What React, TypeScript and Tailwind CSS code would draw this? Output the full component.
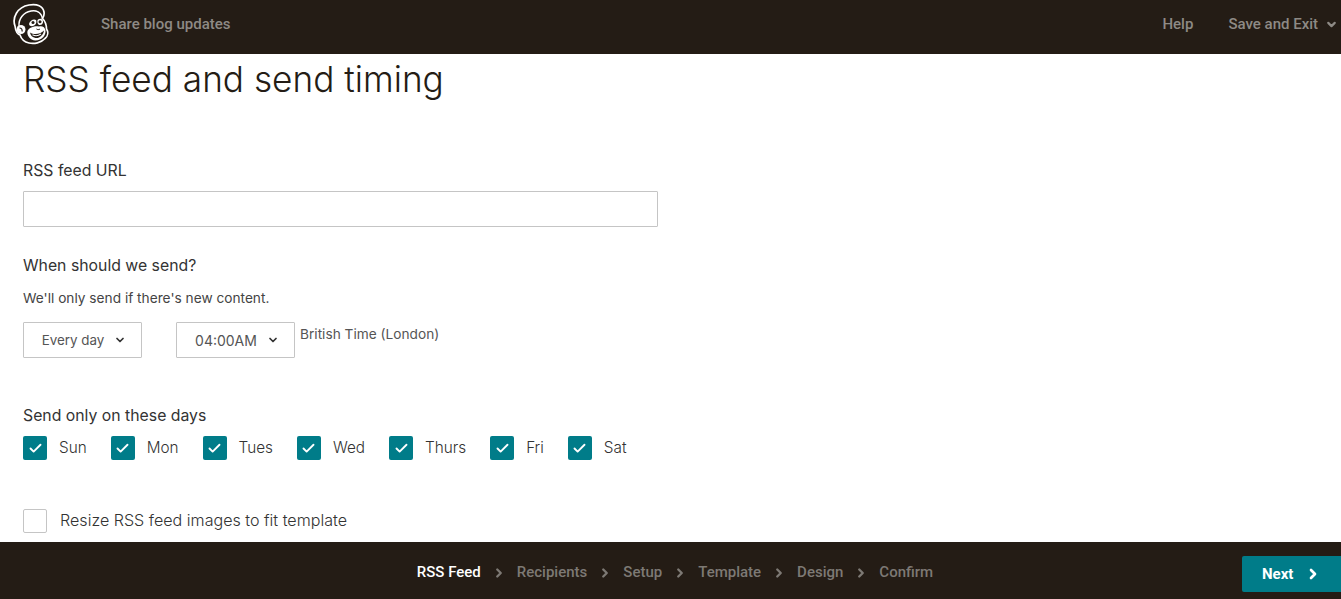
import { Check, ChevronDown, ChevronRight } from "lucide-react";

const days = ["Sun", "Mon", "Tues", "Wed", "Thurs", "Fri", "Sat"];

const steps = ["Recipients", "Setup", "Template", "Design", "Confirm"];

function Logo() {
  return (
    <svg width="38" height="42" viewBox="0 0 38 42" fill="none" className="ml-[12px] mt-[3px]">
      {/* head and cap outline */}
      <path
        d="M3 23 C0 15 5 4 17 2 C25 0.500 31 3 32 9 C32.500 12 31.500 14 30.500 15.500 C33 18 34.500 22 34.500 26 C36.500 29 36 33 33 35.500 C29 40 22 41 17 40 C12 39 9 35 8 32 C5 31 3.500 27 3 23 Z"
        fill="#241c15"
        stroke="#fff"
        strokeWidth="1.700"
      />
      {/* cap brim */}
      <path d="M7 23 C6.500 16 11 9.500 19 8 C24 7 29 9 30.500 15.500" stroke="#fff" strokeWidth="1.500" />
      {/* ear */}
      <circle cx="9" cy="26.500" r="4.500" fill="#fff" />
      <path d="M7.500 25 C9.500 25 10.500 26.500 10 28.500" stroke="#241c15" strokeWidth="1.200" />
      {/* eye patches */}
      <path d="M17 21 C18 17 22 15.500 24 17 C25 19 24 22 21 23 C19 23.500 17.500 23 17 21 Z" fill="#fff" />
      <path d="M25.500 17 C27.500 15 30.500 15.500 31 18 C31.500 20.500 29.500 22.500 27 22 C25.500 21 25 19 25.500 17 Z" fill="#fff" />
      <circle cx="21" cy="19.500" r="1.500" fill="#241c15" />
      <circle cx="28" cy="18.800" r="1.500" fill="#241c15" />
      {/* muzzle and mouth */}
      <path d="M15.500 28 C17 24 24 22.500 27 23.500 C30 22.500 33 24 33.500 27.500 C34 32 30 37.500 23.500 37.500 C18 37.500 14.500 32 15.500 28 Z" fill="#fff" />
      <path d="M18 29.500 C22 32 28 31.500 32 27.500 C31.500 32 27.500 35.500 23.500 35 C20.500 34.500 18.500 32.500 18 29.500 Z" fill="#241c15" />
      <path d="M20.500 31.800 C23 33 26.500 32.800 29 31" stroke="#fff" strokeWidth="1.100" />
      <path d="M24.500 26 C25.500 26.800 27 26.800 28 26" stroke="#241c15" strokeWidth="1" />
    </svg>
  );
}

function Select({ label, className }: { label: string; className: string }) {
  return (
    <div
      className={`flex h-[36px] w-[119px] items-center justify-center gap-[10px] rounded-[1px] border border-[#c5c5c5] pl-[3px] text-[#555] ${className}`}
    >
      {label}
      <ChevronDown size={12} strokeWidth={3.500} className="text-[#333]" />
    </div>
  );
}

export default function App() {
  return (
    <div className="flex h-[599px] w-[1341px] flex-col overflow-hidden bg-white font-['Inter',sans-serif] text-[#241c15]">
      <header className="flex h-[54px] shrink-0 items-start bg-[#241c15] font-['Roboto',sans-serif] text-[15px] font-medium text-[#8e8a85]">
        <Logo />
        <span className="ml-[51px] mt-[13px]">Share blog updates</span>
        <span className="ml-auto mt-[13px]">Help</span>
        <span className="ml-[35px] mt-[13px]">Save and Exit</span>
        <ChevronDown size={13} strokeWidth={4} className="ml-[7px] mr-[3px] mt-[18px]" />
      </header>

      <main className="min-h-0 flex-1 overflow-hidden pl-[23px]">
        <h1 className="mt-[3px] text-[35.200px] leading-[44px] font-light">RSS feed and send timing</h1>

        <p className="mt-[59px] text-[15.800px] leading-[22px] text-[#333]">RSS feed URL</p>
        <div className="mt-[9px] h-[36px] w-[635px] rounded-[1px] border border-[#c5c5c5]" />

        <p className="mt-[28px] text-[15.800px] leading-[22px] text-[#333]">When should we send?</p>
        <p className="mt-[11px] text-[13.700px] leading-[20px] text-[#444]">We'll only send if there's new content.</p>

        <div className="mt-[14px] flex items-start text-[14px]">
          <Select label="Every day" className="text-[13.400px]" />
          <Select label="04:00AM" className="ml-[34px]" />
          <span className="ml-[5px] mt-[2px] text-[13.700px] leading-[20px] text-[#555]">British Time (London)</span>
        </div>

        <p className="mt-[47px] text-[15.800px] leading-[22px] text-[#333]">Send only on these days</p>
        <div className="mt-[9px] flex items-center gap-[24px]">
          {days.map((day) => (
            <div key={day} className="flex items-center">
              <span className="flex h-[24px] w-[24px] items-center justify-center rounded-[2px] bg-[#007c89] text-white">
                <Check size={15} strokeWidth={3} />
              </span>
              <span className="ml-[12px] text-[15.300px] font-light text-[#333]">{day}</span>
            </div>
          ))}
        </div>

        <div className="mt-[49px] flex items-center">
          <span className="h-[24px] w-[24px] rounded-[2px] border border-[#c5c5c5]" />
          <span className="ml-[13px] mt-[-2px] text-[16.100px] font-light text-[#333]">Resize RSS feed images to fit template</span>
        </div>
      </main>

      <footer className="relative flex h-[57px] shrink-0 items-start justify-center bg-[#241c15] font-['Roboto',sans-serif] text-[15px] font-medium text-[#7d7974]">
        <div className="ml-[9px] mt-[22px] flex items-center leading-[16px]">
          <span className="text-white">RSS Feed</span>
          {steps.map((step) => (
            <div key={step} className="flex items-center">
              <ChevronRight size={14} strokeWidth={4} className="mx-[11px] mt-[2px]" />
              <span>{step}</span>
            </div>
          ))}
        </div>
        <div className="absolute right-0 top-[14px] flex h-[36px] w-[99px] items-center rounded-l-[2px] bg-[#007c89] pl-[20px] font-bold text-white">
          Next
          <ChevronRight size={16} strokeWidth={4} className="ml-[12px]" />
        </div>
      </footer>
    </div>
  );
}
